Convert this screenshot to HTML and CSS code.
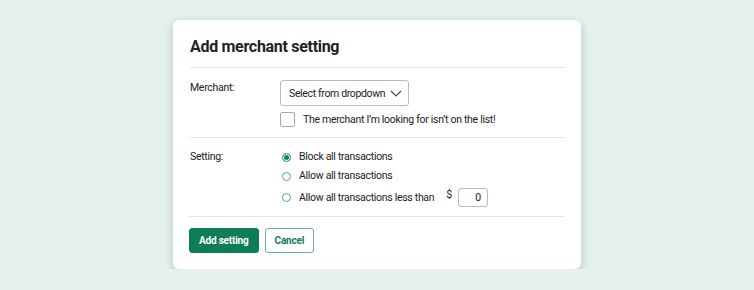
FILE: index.html
```html
<!DOCTYPE html>
<html lang="en">
<head>
  <meta charset="UTF-8">
  <meta name="viewport" content="width=device-width, initial-scale=1.0">
  <title>Add merchant setting</title>
  <link rel="stylesheet" href="styles.css">
</head>
<body>
  <div class="card">
    <h1>Add merchant setting</h1>
    <div class="row merchant-row">
      <div class="label">Merchant:</div>
      <div class="field">
        <button type="button" class="select">Select from dropdown
          <svg width="12" height="7" viewBox="0 0 12 7"><path d="M1 1l5 5 5-5" fill="none" stroke="#444" stroke-width="1.1"/></svg>
        </button>
        <label class="check"><span class="box"></span> The merchant I’m looking for isn’t on the list!</label>
      </div>
    </div>
    <div class="row setting-row">
      <div class="label">Setting:</div>
      <div class="field options">
        <label class="radio"><span class="dot checked"></span> Block all transactions</label>
        <label class="radio"><span class="dot"></span> Allow all transactions</label>
        <label class="radio"><span class="dot"></span> Allow all transactions less than
          <span class="dollar">$</span><span class="amount">0</span></label>
      </div>
    </div>
    <div class="actions">
      <button type="button" class="btn primary">Add setting</button>
      <button type="button" class="btn secondary">Cancel</button>
    </div>
  </div>
</body>
</html>
```

FILE: styles.css
```css
body {
  margin: 0;
  background-color: #e4f1ec;
  font-family: "Roboto", "Liberation Sans", sans-serif;
  color: #222;
  font-size: 10.5px;
  letter-spacing: -0.3px;
}
.card {
  width: 376px;
  margin: 20px 0 0 173px;
  padding: 16px 16px 16px 16px;
  background: #fff;
  border-radius: 6px;
  box-shadow: 0 3px 8px rgba(40, 70, 60, 0.25);
}
h1 {
  font-size: 16px;
  font-weight: 700;
  margin: 1px 0 0 1px;
  padding-bottom: 11px;
  border-bottom: 1px solid #e6e6e6;
  letter-spacing: -0.3px;
  line-height: 19px;
}
.row {
  display: flex;
  border-bottom: 1px solid #e6e6e6;
}
.merchant-row {
  padding: 12px 0 10px;
}
.setting-row {
  padding: 12px 0 9px;
}
.label {
  width: 90px;
  padding-left: 1px;
}
.merchant-row .label {
  padding-top: 1px;
}
.field {
  display: flex;
  flex-direction: column;
  align-items: flex-start;
}
.select {
  display: flex;
  align-items: center;
  gap: 5px;
  height: 26px;
  padding: 0 6px 0 8px;
  border: 1px solid #b9b9b9;
  border-radius: 3px;
  background: #fff;
  font: inherit;
  letter-spacing: -0.35px;
  color: #222;
}
.check {
  display: flex;
  align-items: center;
  gap: 8px;
  margin-top: 6px;
}
.box {
  width: 13px;
  height: 13px;
  border: 1px solid #aaa;
  border-radius: 2px;
}
.options {
  gap: 5px;
}
.radio {
  display: flex;
  align-items: center;
  gap: 8px;
  padding-left: 2px;
  line-height: 14px;
}
.dot {
  width: 7px;
  height: 7px;
  border: 1px solid #4aa787;
  border-radius: 50%;
}
.dot.checked {
  background: #13845d;
  box-shadow: inset 0 0 0 1px #fff;
}
.dollar {
  margin-left: 4px;
  margin-top: -6px;
}
.amount {
  width: 22px;
  height: 17px;
  line-height: 17px;
  padding-right: 6px;
  text-align: right;
  border: 1px solid #bbb;
  border-radius: 3px;
  margin-left: -2px;
}
.actions {
  display: flex;
  gap: 6px;
  padding-top: 11px;
}
.btn {
  height: 25px;
  border-radius: 3px;
  font: inherit;
  font-size: 10px;
  font-weight: 700;
  letter-spacing: -0.2px;
  padding: 0 9px;
}
.primary {
  background: #0e7d56;
  border: 1px solid #0e7d56;
  color: #fff;
}
.secondary {
  background: #fff;
  border: 1px solid #66b59a;
  color: #0e7d56;
}
```
